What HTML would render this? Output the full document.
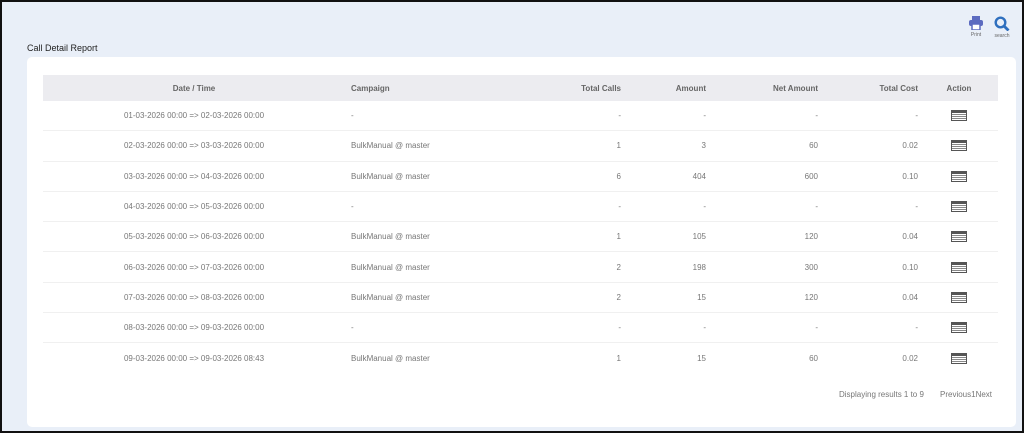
<!DOCTYPE html>
<html><head><style>
body{margin:0;width:1024px;height:433px;overflow:hidden;font-family:"Liberation Sans",sans-serif;}
.frame{position:absolute;left:0;top:0;width:1020px;height:429px;border:2px solid #111;background:#e9eff8;}
.title{position:absolute;left:25px;top:41px;font-size:9px;color:#222;}
.card{position:absolute;left:25px;top:55px;width:989px;height:370px;background:#fff;border-radius:5px;}
table{position:absolute;left:16px;top:18px;width:955px;border-collapse:collapse;font-size:8px;color:#777;}
th{background:#ececf0;height:26px;font-weight:bold;color:#666;padding:0;}
td{height:29.3px;border-bottom:1px solid #f0f0f0;padding:0;}
.c{text-align:center}.l{text-align:left}.r{text-align:right;padding-right:2px}
.ico{display:inline-block;width:14px;height:9px;border:1px solid #555;background:linear-gradient(#555 0 2px,#fff 2px 3px,#888 3px 4px,#fff 4px 5px,#888 5px 6px,#fff 6px 7px,#888 7px 8px,#fff 8px);vertical-align:middle}
.pg{position:absolute;top:333px;font-size:8px;color:#777}
.tool{position:absolute;top:14px;font-size:5px;color:#666;text-align:center}
</style></head><body><div class="frame">
<div class="tool" style="left:964px;width:20px"><svg width="16" height="14" viewBox="0 0 16 14"><rect x="4" y="0" width="8" height="4" fill="#5c6bc0"/><rect x="1" y="4" width="14" height="6" rx="2" fill="#5c6bc0"/><rect x="4" y="8" width="8" height="6" fill="#fff" stroke="#5c6bc0" stroke-width="1.5"/></svg><br>Print</div>
<div class="tool" style="left:988px;width:24px"><svg width="16" height="15" viewBox="0 0 16 15"><circle cx="6.5" cy="6.5" r="4.8" fill="none" stroke="#2f6fbe" stroke-width="2.4"/><line x1="10" y1="10" x2="14.5" y2="14.5" stroke="#2f6fbe" stroke-width="2.8"/></svg><br>search</div>
<div class="title">Call Detail Report</div>
<div class="card"><table>
<colgroup><col style="width:302px"><col style="width:150px"><col style="width:128px"><col style="width:85px"><col style="width:112px"><col style="width:100px"><col style="width:78px"></colgroup>
<tr><th class="c">Date / Time</th><th class="l" style="padding-left:6px">Campaign</th><th class="r">Total Calls</th><th class="r">Amount</th><th class="r">Net Amount</th><th class="r">Total Cost</th><th class="c">Action</th></tr>
<tr><td class="c">01-03-2026 00:00 =&gt; 02-03-2026 00:00</td><td style="padding-left:6px">-</td><td class="r">-</td><td class="r">-</td><td class="r">-</td><td class="r">-</td><td class="c"><span class="ico"></span></td></tr>
<tr><td class="c">02-03-2026 00:00 =&gt; 03-03-2026 00:00</td><td style="padding-left:6px">BulkManual @ master</td><td class="r">1</td><td class="r">3</td><td class="r">60</td><td class="r">0.02</td><td class="c"><span class="ico"></span></td></tr>
<tr><td class="c">03-03-2026 00:00 =&gt; 04-03-2026 00:00</td><td style="padding-left:6px">BulkManual @ master</td><td class="r">6</td><td class="r">404</td><td class="r">600</td><td class="r">0.10</td><td class="c"><span class="ico"></span></td></tr>
<tr><td class="c">04-03-2026 00:00 =&gt; 05-03-2026 00:00</td><td style="padding-left:6px">-</td><td class="r">-</td><td class="r">-</td><td class="r">-</td><td class="r">-</td><td class="c"><span class="ico"></span></td></tr>
<tr><td class="c">05-03-2026 00:00 =&gt; 06-03-2026 00:00</td><td style="padding-left:6px">BulkManual @ master</td><td class="r">1</td><td class="r">105</td><td class="r">120</td><td class="r">0.04</td><td class="c"><span class="ico"></span></td></tr>
<tr><td class="c">06-03-2026 00:00 =&gt; 07-03-2026 00:00</td><td style="padding-left:6px">BulkManual @ master</td><td class="r">2</td><td class="r">198</td><td class="r">300</td><td class="r">0.10</td><td class="c"><span class="ico"></span></td></tr>
<tr><td class="c">07-03-2026 00:00 =&gt; 08-03-2026 00:00</td><td style="padding-left:6px">BulkManual @ master</td><td class="r">2</td><td class="r">15</td><td class="r">120</td><td class="r">0.04</td><td class="c"><span class="ico"></span></td></tr>
<tr><td class="c">08-03-2026 00:00 =&gt; 09-03-2026 00:00</td><td style="padding-left:6px">-</td><td class="r">-</td><td class="r">-</td><td class="r">-</td><td class="r">-</td><td class="c"><span class="ico"></span></td></tr>
<tr><td class="c" style="border:none">09-03-2026 00:00 =&gt; 09-03-2026 08:43</td><td style="padding-left:6px;border:none">BulkManual @ master</td><td class="r" style="border:none">1</td><td class="r" style="border:none">15</td><td class="r" style="border:none">60</td><td class="r" style="border:none">0.02</td><td class="c" style="border:none"><span class="ico"></span></td></tr>
</table>
<div class="pg" style="left:812px">Displaying results 1 to 9</div>
<div class="pg" style="left:913px">Previous1Next</div>
</div></div></body></html>
